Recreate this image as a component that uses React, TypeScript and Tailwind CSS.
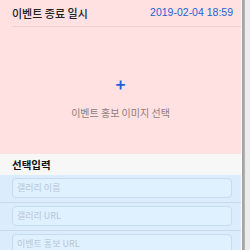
const kr = { fontFamily: '"Noto Sans CJK KR", "Noto Sans", sans-serif' };

const fields = ['갤러리 이름', '갤러리 URL', '이벤트 홍보 URL'];

export default function App() {
  return (
    <div className="flex h-[250px] w-[250px] overflow-hidden bg-white" style={kr}>
      <div className="flex w-[241px] flex-col">
        <div className="flex h-[154px] shrink-0 flex-col bg-[#ffe1e1]">
          <div className="ml-3 flex h-[27px] shrink-0 items-center justify-between border-b border-[#f0cfcf] pr-2">
            <span className="text-[11px] font-medium text-[#222]">이벤트 종료 일시</span>
            <span className="text-[10.5px] text-[#1f5fcf]" style={{ fontFamily: '"Liberation Sans", sans-serif' }}>
              2019-02-04 18:59
            </span>
          </div>
          <div className="flex flex-1 flex-col items-center justify-center gap-[13px] pt-[14px]">
            <span className="text-[17px] font-semibold leading-none text-[#1f5fd8]">+</span>
            <span className="text-[10px] text-[#8f7d7d]">이벤트 홍보 이미지 선택</span>
          </div>
        </div>
        <div className="flex h-[21px] shrink-0 items-center bg-[#f7f7f7] px-3">
          <span className="text-[10.5px] font-bold text-[#111]">선택입력</span>
        </div>
        <div className="flex flex-1 flex-col overflow-hidden bg-[#dbedfd]">
          {fields.map((f) => (
            <div key={f} className="shrink-0 border-b border-[#c9d9e8] pb-[4px] pl-3 pr-[9px] pt-[3px]">
              <div className="flex h-[20px] items-center rounded-[4px] border border-[#c6dcf0] bg-[#dff0ff] px-[4px] text-[9px] text-[#b9c7d5]">
                {f}
              </div>
            </div>
          ))}
        </div>
      </div>
      <div className="w-px bg-white" />
      <div className="w-[3px] bg-gradient-to-r from-[#9a9a9a] to-[#b8b8b8]" />
      <div className="flex-1 bg-[#ececec]" />
    </div>
  );
}
